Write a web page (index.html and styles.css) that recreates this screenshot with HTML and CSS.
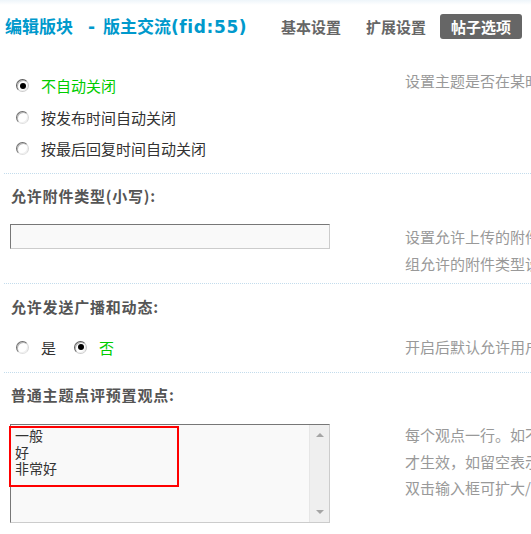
FILE: index.html
```html
<!DOCTYPE html>
<html lang="zh-CN">
<head>
<meta charset="utf-8">
<title>编辑版块 - 帖子选项</title>
<link rel="stylesheet" href="styles.css">
</head>
<body>
<div class="header">
  <h1 class="title"><span>编辑版块</span><span class="dash">-</span><span>版主交流</span><span class="fid">(fid:55)</span></h1>
  <ul class="tabs">
    <li>基本设置</li>
    <li>扩展设置</li>
    <li class="active">帖子选项</li>
  </ul>
</div>
<div class="form">
  <div class="sec sec-close">
    <div class="row">
      <ul class="field radios">
        <li><span class="radio checked"></span><span class="green">不自动关闭</span></li>
        <li><span class="radio"></span><span>按发布时间自动关闭</span></li>
        <li><span class="radio"></span><span>按最后回复时间自动关闭</span></li>
      </ul>
      <div class="tips">设置主题是否在某时间后自动关闭，禁止普通用户回复</div>
    </div>
  </div>
  <div class="sec sec-attach">
    <div class="label">允许附件类型(小写):</div>
    <div class="row">
      <div class="field"><div class="input"></div></div>
      <div class="tips">设置允许上传的附件扩展名，多个扩展名之间用半角逗号分隔，本设置将覆盖用户<br>组允许的附件类型设置，留空为使用用户组的设置</div>
    </div>
  </div>
  <div class="sec sec-feed">
    <div class="label">允许发送广播和动态:</div>
    <div class="row">
      <div class="field inline">
        <span class="radio"></span><span>是</span>
        <span class="radio second checked"></span><span class="green">否</span>
      </div>
      <div class="tips">开启后默认允许用户发送广播和动态</div>
    </div>
  </div>
  <div class="sec sec-view">
    <div class="label">普通主题点评预置观点:</div>
    <div class="row">
      <div class="field">
        <div class="textarea">
          <div class="ta-text">一般<br>好<br>非常好</div>
          <div class="scrollbar"><span class="arrow up"></span><span class="arrow down"></span></div>
          <div class="mark"></div>
        </div>
      </div>
      <div class="tips">每个观点一行。如不填写则使用全局设置，开启点评功能后<br>才生效，如留空表示不使用预置观点<br>双击输入框可扩大/缩小</div>
    </div>
  </div>
</div>
</body>
</html>
```
FILE: styles.css
```css
html, body {
  margin: 0;
  overflow: hidden;
  background: #fff;
}
body {
  font-family: "Noto Sans CJK SC", sans-serif;
  font-size: 15px;
  color: #333;
}
.header {
  display: flex;
  align-items: center;
  height: 53px;
  padding: 0 9px 0 5px;
  background: linear-gradient(#eef5fa, #fff 5px);
}
.title {
  margin: 0;
  font-family: "DejaVu Sans", "Noto Sans CJK SC", sans-serif;
  font-size: 17px;
  font-weight: 700;
  line-height: 20px;
  color: #0099cc;
  white-space: nowrap;
}
.dash {
  display: inline-block;
  width: 30px;
  padding-left: 7px;
  box-sizing: border-box;
  text-align: center;
}
.fid {
  letter-spacing: 0.6px;
}
.tabs {
  display: flex;
  gap: 3px;
  margin: 0 0 0 auto;
  padding: 0;
  list-style: none;
}
.tabs li {
  height: 25px;
  line-height: 25px;
  padding: 0 11px;
  font-size: 15px;
  font-weight: 700;
  color: #666;
  border-radius: 3px;
  white-space: nowrap;
}
.tabs li.active {
  background: #666;
  color: #fff;
}
.form {
  margin-left: 4px;
}
.sec {
  border-bottom: 1px dotted #c3dcec;
}
.sec-close {
  padding: 15px 0 8.5px;
}
.sec-attach {
  padding: 10px 0 6px;
}
.sec-feed {
  padding: 11px 0 11.5px;
}
.sec-view {
  padding: 10px 0 12px;
}
.label {
  padding-left: 7px;
  line-height: 24px;
  font-weight: 700;
  color: #555;
  letter-spacing: 0.8px;
  white-space: nowrap;
}
.row {
  display: flex;
  align-items: flex-start;
}
.sec-feed .row,
.sec-view .row {
  margin-top: 15px;
}
.sec-attach .row {
  margin-top: 16px;
}
.field {
  flex: none;
  width: 320px;
  margin: 0 0 0 6px;
}
.tips {
  flex: none;
  margin-left: 75px;
  color: #999;
  line-height: 26.5px;
  white-space: nowrap;
}
.radios {
  list-style: none;
  padding: 2px 0 0 6px;
  box-sizing: border-box;
}
.radios li {
  display: flex;
  align-items: center;
  gap: 12px;
  height: 31.5px;
  white-space: nowrap;
}
.inline {
  display: flex;
  align-items: center;
  height: 26.5px;
  padding-left: 6px;
  box-sizing: border-box;
}
.inline .radio {
  margin-right: 12px;
}
.inline .radio.second {
  margin-left: 18px;
}
.radio {
  position: relative;
  flex: none;
  width: 13px;
  height: 13px;
  box-sizing: border-box;
  border: 1px solid;
  border-color: #6e6e6e #d6d6d6 #e0e0e0 #6e6e6e;
  border-radius: 50%;
  background: #fff;
  box-shadow: inset 1px 1px 0 #b8b8b8, inset -1px -1px 0 #f0f0f0;
}
.radio.checked {
  border-color: #5e5e5e #c4c4c4 #cccccc #5e5e5e;
}
.radio.checked::after {
  content: "";
  position: absolute;
  left: 2.5px;
  top: 2.5px;
  width: 6px;
  height: 6px;
  border-radius: 50%;
  background: #000;
}
.green {
  color: #00cc00;
}
.input {
  width: 320px;
  height: 25px;
  box-sizing: border-box;
  border: 1px solid;
  border-color: #777 #ccc #ccc #777;
  background: #f9f9f9;
}
.textarea {
  position: relative;
  display: flex;
  width: 320px;
  height: 99px;
  margin-top: 2px;
  box-sizing: border-box;
  border: 1px solid;
  border-color: #777 #ccc #ccc #777;
  background: #f9f9f9;
}
.ta-text {
  flex: 1;
  padding: 2px 4px;
  font-size: 14px;
  line-height: 16.5px;
  color: #333;
}
.scrollbar {
  display: flex;
  flex-direction: column;
  justify-content: space-between;
  align-items: center;
  width: 20px;
  padding: 8px 0;
  box-sizing: border-box;
  background: #efefef;
  border-left: 1px solid #e6e6e6;
}
.arrow {
  width: 0;
  height: 0;
  border-left: 4px solid transparent;
  border-right: 4px solid transparent;
}
.arrow.up {
  border-bottom: 4px solid #a5a5a5;
}
.arrow.down {
  border-top: 4px solid #a5a5a5;
}
.mark {
  position: absolute;
  left: -2px;
  top: 1px;
  width: 170px;
  height: 61px;
  box-sizing: border-box;
  border: 2px solid #f00;
}
```
